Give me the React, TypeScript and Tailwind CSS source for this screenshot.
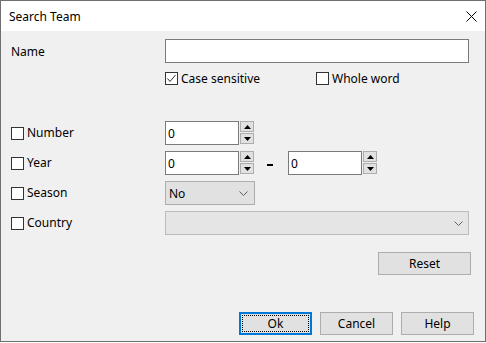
import React from "react"

function CheckBox({ checked = false }: { checked?: boolean }) {
  return (
    <div className="w-[13px] h-[13px] border border-[#333333] bg-white flex items-center justify-center shrink-0">
      {checked && (
        <svg width="11" height="11" viewBox="0 0 11 11">
          <polyline points="1.5,5.5 4,8.5 9.5,2" fill="none" stroke="#333333" strokeWidth="1" />
        </svg>
      )}
    </div>
  )
}

function Chevron() {
  return (
    <svg width="9" height="5" viewBox="0 0 9 5">
      <polyline points="0.5,0.5 4.5,4.5 8.5,0.5" fill="none" stroke="#606060" strokeWidth="1" />
    </svg>
  )
}

function Spin() {
  return (
    <div className="ml-[1px] flex flex-col gap-[1px]">
      <div className="w-[14px] h-[11px] bg-[#e1e1e1] border border-[#adadad] flex items-center justify-center">
        <svg width="7" height="4" viewBox="0 0 7 4">
          <polygon points="3.5,0 7,4 0,4" fill="#000" />
        </svg>
      </div>
      <div className="w-[14px] h-[11px] bg-[#e1e1e1] border border-[#adadad] flex items-center justify-center">
        <svg width="7" height="4" viewBox="0 0 7 4">
          <polygon points="0,0 7,0 3.5,4" fill="#000" />
        </svg>
      </div>
    </div>
  )
}

function NumField({ value }: { value: string }) {
  return (
    <div className="flex items-start h-[24px]">
      <div className="w-[74px] h-[24px] bg-white border border-[#7a7a7a] flex items-center pl-[2px] pt-[1px]">
        {value}
      </div>
      <Spin />
    </div>
  )
}

function Button({ label, width, focused = false }: { label: string; width: string; focused?: boolean }) {
  return (
    <div
      className={`relative ${width} h-[23px] bg-[#e1e1e1] flex items-center justify-center pt-[1px] ${
        focused ? "border-2 border-[#0078d7]" : "border border-[#adadad]"
      }`}
    >
      {focused && <div className="absolute inset-[1px] border border-dotted border-black" />}
      {label}
    </div>
  )
}

export default function App() {
  return (
    <div className="w-[486px] h-[342px] border border-[#707070] bg-[#f0f0f0] flex flex-col font-['Noto_Sans',sans-serif] text-[12px] text-black leading-none">
      {/* Title bar */}
      <div className="h-[30px] bg-white flex items-center justify-between pl-[8px] pr-[8px] pt-[1px]">
        <span>Search Team</span>
        <svg width="11" height="11" viewBox="0 0 11 11">
          <line x1="0.5" y1="0.5" x2="10.5" y2="10.5" stroke="#000" strokeWidth="1" />
          <line x1="10.5" y1="0.5" x2="0.5" y2="10.5" stroke="#000" strokeWidth="1" />
        </svg>
      </div>

      {/* Body */}
      <div className="flex-1 flex flex-col pl-[10px]">
        <div className="mt-[8px] flex items-center h-[24px]">
          <div className="w-[154px] pt-[1px]">Name</div>
          <div className="w-[304px] h-[24px] bg-white border border-[#7a7a7a]" />
        </div>

        <div className="mt-[9px] flex items-center h-[13px] pl-[154px]">
          <div className="w-[151px] flex items-center gap-[3px]">
            <CheckBox checked />
            <span>Case sensitive</span>
          </div>
          <div className="flex items-center gap-[3px]">
            <CheckBox />
            <span>Whole word</span>
          </div>
        </div>

        <div className="mt-[36px] flex items-center h-[24px]">
          <div className="w-[154px] flex items-center gap-[3px]">
            <CheckBox />
            <span>Number</span>
          </div>
          <NumField value="0" />
        </div>

        <div className="mt-[6px] flex items-center h-[24px]">
          <div className="w-[154px] flex items-center gap-[3px]">
            <CheckBox />
            <span>Year</span>
          </div>
          <NumField value="0" />
          <div className="ml-[13px] mt-[4px] w-[6px] h-[2px] bg-black" />
          <div className="ml-[15px]">
            <NumField value="0" />
          </div>
        </div>

        <div className="mt-[6px] flex items-center h-[24px]">
          <div className="w-[154px] flex items-center gap-[3px]">
            <CheckBox />
            <span>Season</span>
          </div>
          <div className="w-[90px] h-[24px] bg-[#e1e1e1] border border-[#adadad] flex items-center justify-between pl-[3px] pr-[6px]">
            <span className="pt-[1px]">No</span>
            <Chevron />
          </div>
        </div>

        <div className="mt-[6px] flex items-center h-[24px]">
          <div className="w-[154px] flex items-center gap-[3px]">
            <CheckBox />
            <span>Country</span>
          </div>
          <div className="w-[304px] h-[24px] bg-[#e5e5e5] border border-[#bcbcbc] flex items-center justify-end pr-[5px]">
            <Chevron />
          </div>
        </div>

        <div className="mt-[17px] flex justify-end pr-[14px]">
          <Button label="Reset" width="w-[93px]" />
        </div>

        <div className="mt-[37px] flex justify-end gap-[8px] pr-[11px]">
          <Button label="Ok" width="w-[73px]" focused />
          <Button label="Cancel" width="w-[73px]" />
          <Button label="Help" width="w-[73px]" />
        </div>
      </div>
    </div>
  )
}
